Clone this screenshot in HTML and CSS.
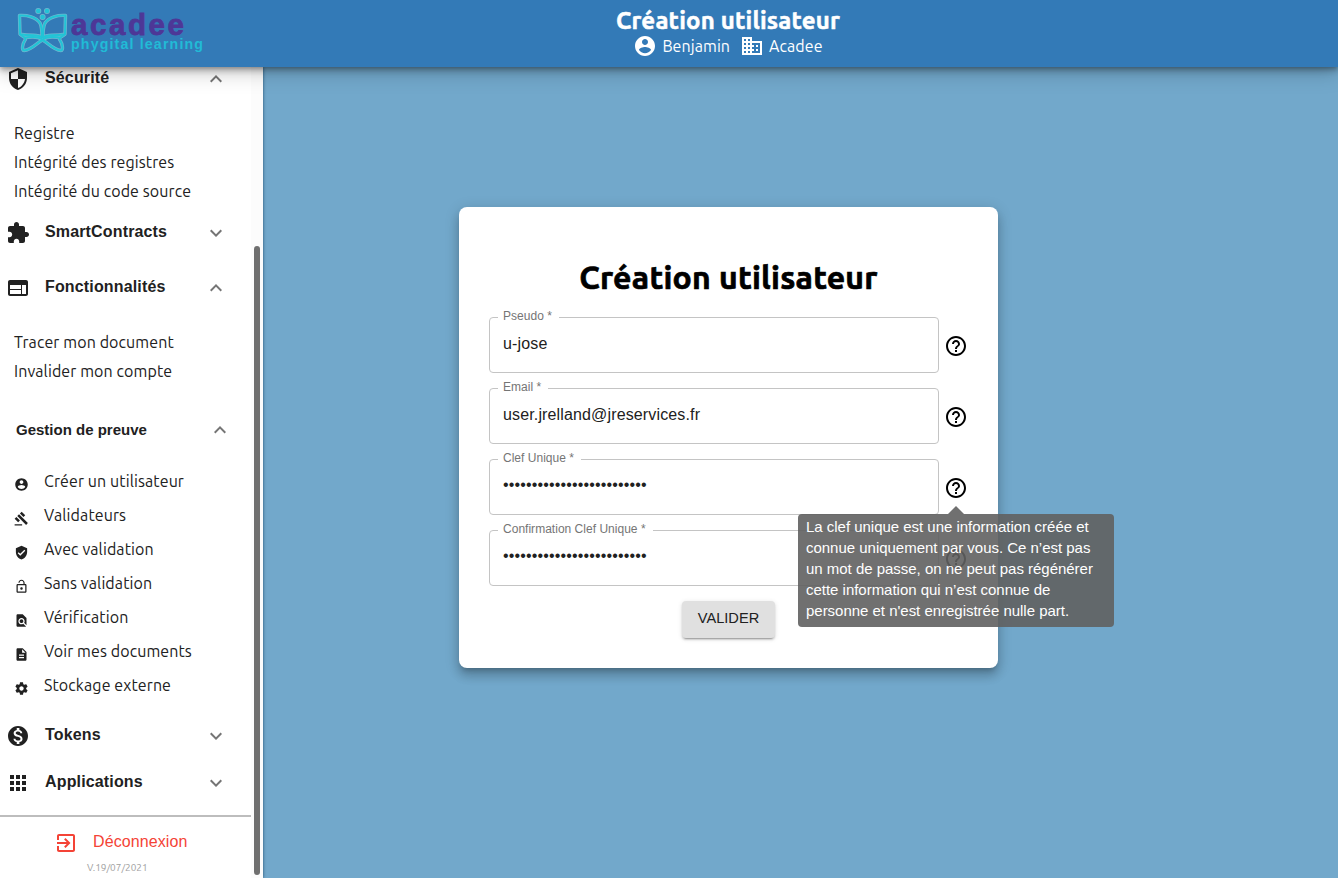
FILE: index.html
```html
<!DOCTYPE html>
<html lang="fr">
<head>
<meta charset="utf-8">
<title>Création utilisateur</title>
<link rel="stylesheet" href="styles.css">
</head>
<body>
<svg class="defs" width="0" height="0">
  <symbol id="more" viewBox="0 0 24 24"><path d="M16.59 8.59 12 13.17 7.41 8.59 6 10l6 6 6-6z"/></symbol>
  <symbol id="less" viewBox="0 0 24 24"><path d="m12 8-6 6 1.41 1.41L12 10.83l4.59 4.58L18 14z"/></symbol>
  <symbol id="user" viewBox="0 0 24 24"><path d="M12 2C6.48 2 2 6.48 2 12s4.48 10 10 10 10-4.48 10-10S17.52 2 12 2zm0 3c1.66 0 3 1.34 3 3s-1.34 3-3 3-3-1.34-3-3 1.34-3 3-3zm0 14.2c-2.5 0-4.71-1.28-6-3.22.03-1.99 4-3.08 6-3.08 1.99 0 5.97 1.09 6 3.08-1.29 1.94-3.5 3.22-6 3.22z"/></symbol>
  <symbol id="help" viewBox="0 0 24 24"><path d="M11 18h2v-2h-2v2zm1-16C6.48 2 2 6.48 2 12s4.48 10 10 10 10-4.48 10-10S17.52 2 12 2zm0 18c-4.41 0-8-3.59-8-8s3.59-8 8-8 8 3.59 8 8-3.59 8-8 8zm0-14c-2.21 0-4 1.79-4 4h2c0-1.1.9-2 2-2s2 .9 2 2c0 2-3 1.75-3 5h2c0-2.25 3-2.5 3-5 0-2.21-1.79-4-4-4z"/></symbol>
  <symbol id="butterfly" viewBox="0 0 205 67">
    <path d="M19.500 15.500C27 15 36 17 40 23C42 27 42 31 42 37.500C38 33.500 34 36.500 20 34.200z"/>
    <path d="M65.500 15.500C58 15 49 17 45 23C43 27 43 31 43 37.500C47 33.500 51 36.500 65 34.200z"/>
    <path d="M21 35C24 37.500 27 37.500 24.500 41C22.500 44 21.500 50.500 24 50.500C32 50 37 42.500 42.500 40C48 42.500 53 50 61 50.500C63.500 50.500 62.500 44 60.500 41C58 37.500 61 37.500 64 35"/>
    <path d="M26 37.500C32 37 37 36 41.500 39M59 37.500C53 37 48 36 43.500 39"/>
    <circle cx="38.300" cy="11" r="1.300"/><circle cx="47" cy="11" r="1.300"/><circle cx="42.600" cy="17" r="1.300"/>
  </symbol>
</svg>

<header class="topbar">
  <svg class="logo" viewBox="0 0 205 67">
    <use class="halo" href="#butterfly" width="205" height="67"/>
    <use class="outline" href="#butterfly" width="205" height="67"/>
    <text class="brand" x="71" y="35" textLength="113" lengthAdjust="spacing">acadee</text>
    <text class="tagline" x="71" y="49" textLength="132" lengthAdjust="spacing">phygital learning</text>
  </svg>
  <div class="heading">
    <h1 class="page-title">Création utilisateur</h1>
    <div class="identity">
      <svg class="icon"><use href="#user"/></svg><span>Benjamin</span>
      <svg class="icon company" viewBox="0 0 24 24"><path d="M12 7V3H2v18h20V7H12zM6 19H4v-2h2v2zm0-4H4v-2h2v2zm0-4H4V9h2v2zm0-4H4V5h2v2zm4 12H8v-2h2v2zm0-4H8v-2h2v2zm0-4H8V9h2v2zm0-4H8V5h2v2zm10 12h-8v-2h2v-2h-2v-2h2v-2h-2V9h8v10zm-2-8h-2v2h2v-2zm0 4h-2v2h2v-2z"/></svg><span>Acadee</span>
    </div>
  </div>
</header>

<div class="layout">
  <aside class="sidebar">
    <nav class="menu">
      <div class="section first"><svg class="icon" viewBox="0 0 24 24"><path d="M12 1 3 5v6c0 5.550 3.840 10.740 9 12 5.160-1.260 9-6.450 9-12V5l-9-4zm0 10.990h7c-.53 4.120-3.280 7.790-7 8.940V12H5V6.300l7-3.110v8.800z"/></svg><span class="name">Sécurité</span><svg class="icon chevron"><use href="#less"/></svg></div>
      <div class="links">
        <a class="link">Registre</a>
        <a class="link">Intégrité des registres</a>
        <a class="link">Intégrité du code source</a>
      </div>
      <div class="section contracts"><svg class="icon" viewBox="0 0 24 24"><path d="M20.500 11H19V7c0-1.100-.9-2-2-2h-4V3.500C13 2.120 11.880 1 10.500 1S8 2.120 8 3.500V5H4c-1.100 0-1.990.9-1.990 2v3.800H3.500c1.490 0 2.700 1.210 2.700 2.700s-1.210 2.700-2.700 2.700H2V20c0 1.100.9 2 2 2h3.800v-1.500c0-1.490 1.210-2.700 2.700-2.700 1.490 0 2.700 1.210 2.700 2.700V22H17c1.100 0 2-.9 2-2v-4h1.500c1.380 0 2.500-1.120 2.500-2.500S21.880 11 20.500 11z"/></svg><span class="name">SmartContracts</span><svg class="icon chevron"><use href="#more"/></svg></div>
      <div class="section features"><svg class="icon" viewBox="0 0 24 24"><path d="M20 4H4c-1.100 0-1.990.9-1.990 2L2 18c0 1.100.9 2 2 2h16c1.100 0 2-.9 2-2V6c0-1.100-.9-2-2-2zm-5 14H4v-4h11v4zm0-5H4V9h11v4zm5 5h-4V9h4v9z"/></svg><span class="name">Fonctionnalités</span><svg class="icon chevron"><use href="#less"/></svg></div>
      <div class="links compact">
        <a class="link">Tracer mon document</a>
        <a class="link">Invalider mon compte</a>
      </div>
      <div class="section proof"><span class="name">Gestion de preuve</span><svg class="icon chevron"><use href="#less"/></svg></div>
      <div class="entries">
        <a class="entry"><svg class="mini"><use href="#user"/></svg><span>Créer un utilisateur</span></a>
        <a class="entry"><svg class="mini" viewBox="0 0 24 24"><path d="M1 21h12v2H1v-2zM5.245 8.070l2.830-2.827 14.140 14.142-2.828 2.828L5.245 8.070zM12.317 1l5.657 5.656-2.830 2.830-5.654-5.660L12.317 1zM3.825 9.485l5.657 5.657-2.828 2.828-5.657-5.657 2.828-2.828z"/></svg><span>Validateurs</span></a>
        <a class="entry"><svg class="mini" viewBox="0 0 24 24"><path d="M12 1 3 5v6c0 5.550 3.840 10.740 9 12 5.160-1.260 9-6.450 9-12V5l-9-4zm-2 16-4-4 1.410-1.410L10 14.170l6.590-6.590L18 9l-8 8z"/></svg><span>Avec validation</span></a>
        <a class="entry"><svg class="mini" viewBox="0 0 24 24"><path d="M12 17c1.100 0 2-.9 2-2s-.9-2-2-2-2 .9-2 2 .9 2 2 2zm6-9h-1V6c0-2.760-2.240-5-5-5S7 3.240 7 6h1.900c0-1.710 1.390-3.100 3.100-3.100s3.100 1.390 3.100 3.100v2H6c-1.100 0-2 .9-2 2v10c0 1.100.9 2 2 2h12c1.100 0 2-.9 2-2V10c0-1.100-.9-2-2-2zm0 12H6V10h12v10z"/></svg><span>Sans validation</span></a>
        <a class="entry"><svg class="mini" viewBox="0 0 24 24"><path d="M20 19.590V8l-6-6H6c-1.100 0-1.990.9-1.990 2L4 20c0 1.100.89 2 1.990 2H18c.45 0 .85-.15 1.190-.4l-4.430-4.430c-.8.520-1.740.83-2.760.83-2.760 0-5-2.240-5-5s2.240-5 5-5 5 2.240 5 5c0 1.020-.31 1.960-.83 2.750L20 19.590zM9 13c0 1.660 1.340 3 3 3s3-1.340 3-3-1.340-3-3-3-3 1.340-3 3z"/></svg><span>Vérification</span></a>
        <a class="entry"><svg class="mini" viewBox="0 0 24 24"><path d="M14 2H6c-1.100 0-1.990.9-1.990 2L4 20c0 1.100.89 2 1.990 2H18c1.100 0 2-.9 2-2V8l-6-6zm2 16H8v-2h8v2zm0-4H8v-2h8v2zm-3-5V3.500L18.500 9H13z"/></svg><span>Voir mes documents</span></a>
        <a class="entry"><svg class="mini" viewBox="0 0 24 24"><path d="M19.430 12.980c.04-.32.070-.64.070-.98s-.03-.66-.07-.98l2.110-1.650c.19-.15.240-.42.120-.64l-2-3.460c-.12-.22-.39-.3-.61-.22l-2.490 1c-.52-.4-1.080-.73-1.690-.98l-.38-2.650C14.460 2.180 14.250 2 14 2h-4c-.25 0-.46.180-.49.420l-.38 2.650c-.61.250-1.170.590-1.690.98l-2.490-1c-.23-.09-.49 0-.61.220l-2 3.460c-.13.220-.07.490.12.640l2.110 1.650c-.04.320-.07.650-.07.980s.03.660.07.980l-2.110 1.650c-.19.150-.24.420-.12.640l2 3.460c.12.220.39.300.61.220l2.490-1c.52.400 1.080.730 1.690.980l.38 2.650c.03.240.24.420.49.420h4c.25 0 .46-.18.490-.42l.38-2.650c.61-.25 1.170-.59 1.690-.98l2.490 1c.23.090.49 0 .61-.22l2-3.460c.12-.22.070-.49-.12-.64l-2.110-1.650zM12 15.500c-1.930 0-3.500-1.570-3.500-3.500s1.570-3.500 3.500-3.500 3.500 1.570 3.500 3.500-1.570 3.500-3.500 3.500z"/></svg><span>Stockage externe</span></a>
      </div>
      <div class="section tokens"><svg class="icon" viewBox="0 0 24 24"><path d="M12 2C6.480 2 2 6.480 2 12s4.480 10 10 10 10-4.480 10-10S17.520 2 12 2zm1.410 16.090V20h-2.670v-1.930c-1.710-.36-3.160-1.460-3.270-3.400h1.960c.1 1.050.82 1.870 2.650 1.870 1.960 0 2.400-.98 2.400-1.590 0-.83-.44-1.610-2.670-2.140-2.480-.6-4.180-1.620-4.180-3.670 0-1.720 1.390-2.840 3.110-3.210V4h2.670v1.950c1.860.45 2.790 1.860 2.850 3.390H14.300c-.05-1.110-.64-1.870-2.220-1.870-1.500 0-2.400.68-2.400 1.640 0 .84.65 1.390 2.670 1.910s4.180 1.390 4.180 3.910c-.01 1.830-1.380 2.830-3.120 3.160z"/></svg><span class="name">Tokens</span><svg class="icon chevron"><use href="#more"/></svg></div>
      <div class="section apps"><svg class="icon" viewBox="0 0 24 24"><path d="M4 8h4V4H4v4zm6 12h4v-4h-4v4zm-6 0h4v-4H4v4zm0-6h4v-4H4v4zm6 0h4v-4h-4v4zm6-10v4h4V4h-4zm-6 4h4V4h-4v4zm6 6h4v-4h-4v4zm0 6h4v-4h-4v4z"/></svg><span class="name">Applications</span><svg class="icon chevron"><use href="#more"/></svg></div>
      <div class="footer">
        <a class="logout"><svg class="icon" viewBox="0 0 24 24"><path d="M10.090 15.590 11.500 17l5-5-5-5-1.410 1.410L12.670 11H3v2h9.670l-2.580 2.590zM19 3H5c-1.110 0-2 .9-2 2v4h2V5h14v14H5v-4H3v4c0 1.100.89 2 2 2h14c1.100 0 2-.9 2-2V5c0-1.100-.9-2-2-2z"/></svg><span>Déconnexion</span></a>
        <div class="version">V.19/07/2021</div>
      </div>
    </nav>
    <div class="scrollbar"><div class="thumb"></div></div>
  </aside>

  <main class="content">
    <form class="card">
      <h2 class="card-title">Création utilisateur</h2>
      <div class="row"><div class="field"><label class="label">Pseudo *</label><span class="value">u-jose</span></div><svg class="icon hint"><use href="#help"/></svg></div>
      <div class="row"><div class="field"><label class="label">Email *</label><span class="value">user.jrelland@jreservices.fr</span></div><svg class="icon hint"><use href="#help"/></svg></div>
      <div class="row"><div class="field"><label class="label">Clef Unique *</label><span class="value secret">•••••••••••••••••••••••••</span></div>
        <div class="anchor hint"><svg class="icon"><use href="#help"/></svg>
          <div class="tooltip">La clef unique est une information créée et<br>connue uniquement par vous. Ce n’est pas<br>un mot de passe, on ne peut pas régénérer<br>cette information qui n’est connue de<br>personne et n'est enregistrée nulle part.</div>
        </div>
      </div>
      <div class="row"><div class="field"><label class="label">Confirmation Clef Unique *</label><span class="value secret">•••••••••••••••••••••••••</span></div><svg class="icon hint"><use href="#help"/></svg></div>
      <button class="submit" type="button">VALIDER</button>
    </form>
  </main>
</div>
</body>
</html>
```
FILE: styles.css
```css
* { box-sizing: border-box; }
body {
  margin: 0;
  height: 878px;
  overflow: hidden;
  display: flex;
  flex-direction: column;
  background: #72a8cb;
  color: #212121;
  font-family: Ubuntu, "Noto Sans", sans-serif;
  font-size: 16px;
}
.defs { position: absolute; }
.icon { width: 24px; height: 24px; flex: none; fill: currentColor; }

.topbar {
  position: relative;
  z-index: 3;
  flex: none;
  display: flex;
  height: 67px;
  padding-right: 87px;
  background: #337ab7;
  color: #fff;
  box-shadow: 0 2px 4px -1px rgba(0,0,0,.2), 0 4px 5px 0 rgba(0,0,0,.14), 0 1px 10px 0 rgba(0,0,0,.12), 0 4px 20px rgba(0,0,0,.25);
}
.logo { width: 205px; height: 67px; flex: none; }
.halo, .outline { fill: none; stroke-linejoin: round; stroke-linecap: round; }
.halo { stroke: #6fb6cf; stroke-width: 3.4; }
.outline { stroke: #21c4d6; stroke-width: 2; }
.brand { font: bold 29.5px "Liberation Sans", sans-serif; fill: #4d3797; stroke: #4d3797; stroke-width: .8; }
.tagline { font: bold 14.2px "Liberation Sans", sans-serif; fill: #21bbd6; }
.heading { flex: 1; display: flex; flex-direction: column; align-items: center; }
.page-title { margin: 6px 0 0; font-size: 24px; line-height: 30px; font-weight: 700; letter-spacing: .2px; -webkit-text-stroke: .5px; }
.identity { display: flex; align-items: center; height: 24px; margin-top: -2px; font-size: 16px; letter-spacing: .08px; }
.identity span { margin-left: 5px; }
.identity .company { margin-left: 10px; }

.layout { flex: 1; display: flex; min-height: 0; }
.sidebar {
  position: relative;
  z-index: 1;
  flex: none;
  display: flex;
  width: 263px;
  background: #fff;
  box-shadow: 0 0 3px rgba(0,40,70,.7);
}
.menu { width: 251px; flex: none; }
.section { display: flex; align-items: center; padding-left: 6px; padding-right: 23px; font: bold 16px "Liberation Sans", sans-serif; letter-spacing: .15px; }
.section .name { flex: 1; margin: -3px 0 0 15px; }
.section .chevron { color: #757575; }
.first { height: 24px; }
.contracts { height: 54px; }
.features { height: 56px; }
.proof { height: 70px; margin-top: 9px; padding: 0 19px 0 16px; font-size: 15px; letter-spacing: 0; }
.proof .name { margin: -2px 0 0; }
.tokens { height: 48px; margin-top: 9px; }
.apps { height: 46px; }
.links { padding: 28px 0 0 14px; }
.links.compact { padding-top: 12px; }
.link { display: block; height: 29px; line-height: 29px; letter-spacing: .1px; }
.entry { display: flex; align-items: center; height: 34px; padding-left: 14px; letter-spacing: .1px; }
.entry span { margin-left: 15px; margin-top: -2px; }
.mini { width: 15px; height: 15px; margin-top: 4px; fill: currentColor; }
.footer { margin-top: 9px; border-top: 2px solid #bdbdbd; padding-top: 14px; }
.logout { display: flex; align-items: center; height: 24px; padding-left: 54px; color: #f44336; font: 16px "Liberation Sans", sans-serif; letter-spacing: .1px; }
.logout span { margin: -3px 0 0 15px; }
.version { margin-top: 6px; padding-left: 87px; font-size: 10px; line-height: 13px; color: #9e9e9e; }
.scrollbar { flex: 1; padding: 179px 0 0 3px; background: #fcfcfc; }
.thumb { width: 6px; height: 629px; border-radius: 3px; background: #6f6f6f; }

.content { flex: 1; margin-right: 144px; padding-top: 140px; display: flex; justify-content: center; align-items: flex-start; }
.card {
  display: flex;
  flex-direction: column;
  width: 539px;
  height: 461px;
  padding: 49px 30px 0;
  border-radius: 8px;
  background: #fff;
  box-shadow: 0 5px 5px -3px rgba(0,0,0,.2), 0 8px 10px 1px rgba(0,0,0,.14), 0 3px 14px 2px rgba(0,0,0,.12);
}
.card-title { margin: 0 0 16px; height: 45px; line-height: 42px; text-align: center; color: #000; font-size: 32px; letter-spacing: .25px; -webkit-text-stroke: .7px; }
.row { display: flex; align-items: center; height: 56px; margin-bottom: 15px; gap: 5px; color: #000; font-family: "Liberation Sans", sans-serif; }
.hint { margin-top: 2px; }
.field { position: relative; width: 450px; height: 56px; padding: 0 13px; border: 1px solid #c4c4c4; border-radius: 4px; }
.label { position: absolute; left: 8px; top: -9px; padding: 0 7px 0 5px; background: #fff; color: #757575; font-size: 12px; line-height: 14px; letter-spacing: .02px; }
.value { display: block; line-height: 52px; color: #212121; letter-spacing: .14px; }
.secret { letter-spacing: .15px; line-height: 50px; }
.anchor { position: relative; height: 24px; }
.tooltip {
  position: absolute;
  z-index: 4;
  top: 38px;
  left: -146px;
  width: 316px;
  height: 113px;
  padding: 2px 8px;
  border-radius: 4px;
  background: rgba(97,97,97,.9);
  color: #fff;
  font-size: 15px;
  letter-spacing: -.02px;
  line-height: 21px;
  white-space: nowrap;
}
.tooltip::before { content: ""; position: absolute; left: 150px; top: -8px; border: solid transparent; border-width: 0 8px 8px; border-bottom-color: rgba(97,97,97,.9); }
.submit {
  align-self: center;
  width: 93px;
  height: 37px;
  padding: 0 0 4px;
  border: 0;
  border-radius: 4px;
  background: #e0e0e0;
  color: #212121;
  font: 14.600px "Liberation Sans", sans-serif;
  box-shadow: 0 3px 1px -2px rgba(0,0,0,.2), 0 2px 2px 0 rgba(0,0,0,.14), 0 1px 5px 0 rgba(0,0,0,.12);
}
```
